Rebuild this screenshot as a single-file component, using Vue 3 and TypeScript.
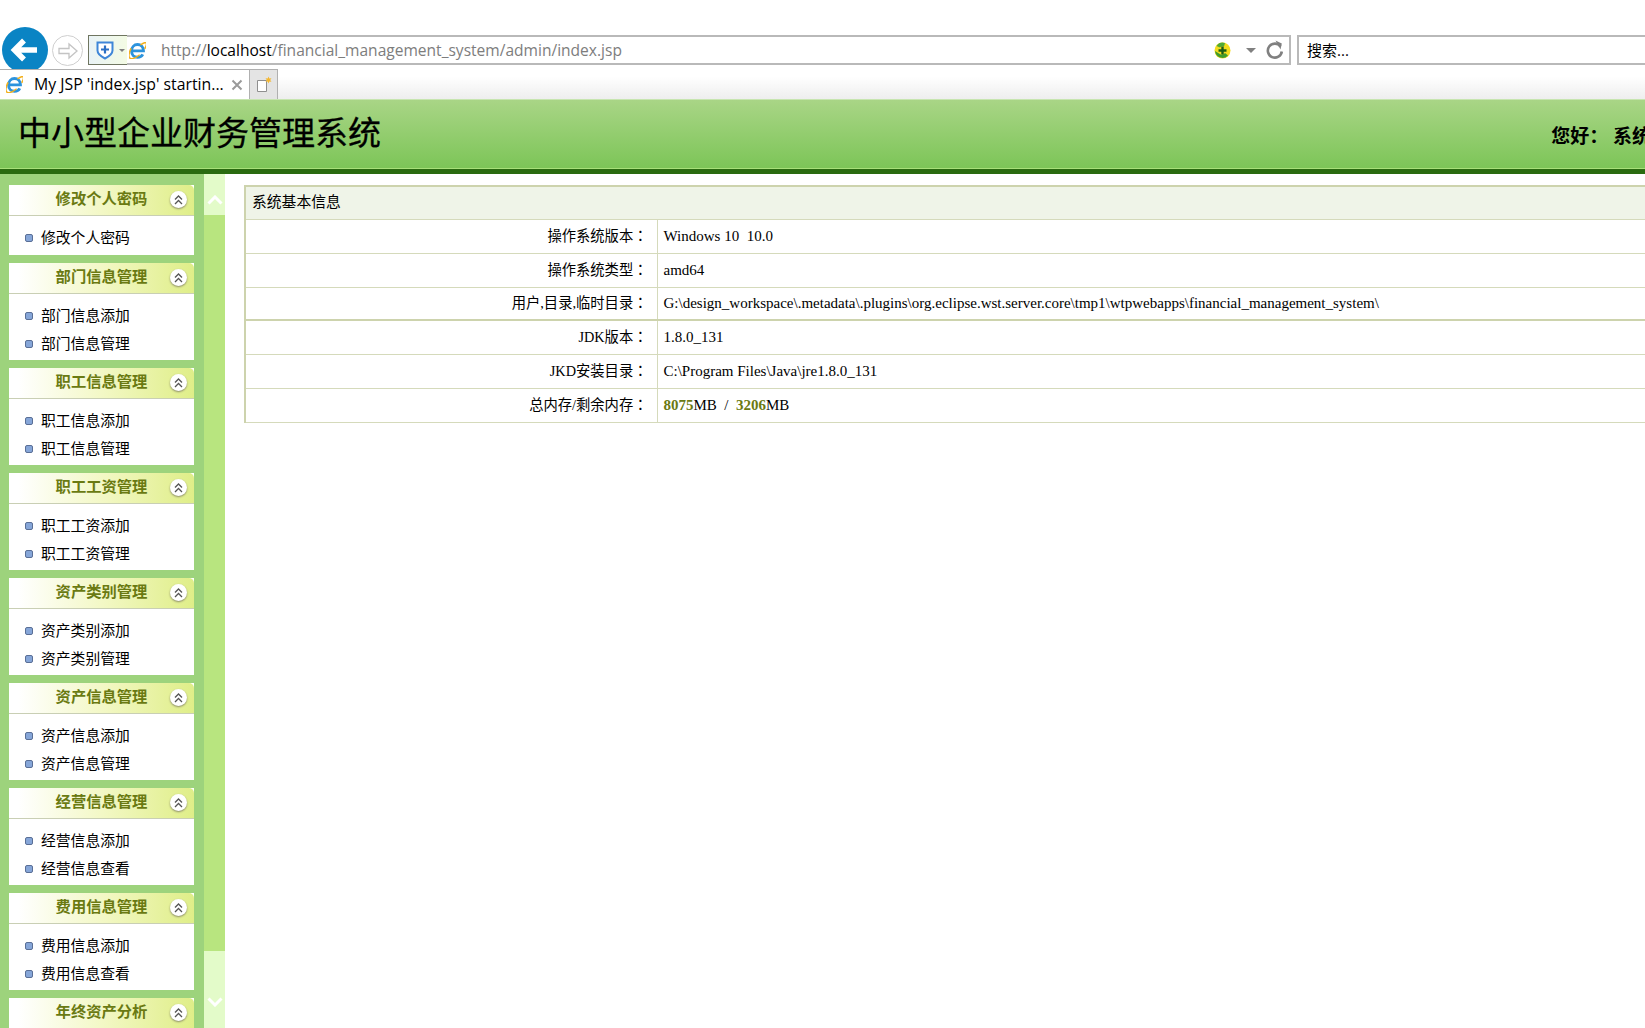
<script setup lang="ts">
interface Panel {
  title: string
  items: string[]
}

const panels: Panel[] = [
  { title: '修改个人密码', items: ['修改个人密码'] },
  { title: '部门信息管理', items: ['部门信息添加', '部门信息管理'] },
  { title: '职工信息管理', items: ['职工信息添加', '职工信息管理'] },
  { title: '职工工资管理', items: ['职工工资添加', '职工工资管理'] },
  { title: '资产类别管理', items: ['资产类别添加', '资产类别管理'] },
  { title: '资产信息管理', items: ['资产信息添加', '资产信息管理'] },
  { title: '经营信息管理', items: ['经营信息添加', '经营信息查看'] },
  { title: '费用信息管理', items: ['费用信息添加', '费用信息查看'] },
  { title: '年终资产分析', items: ['年终资产分析'] },
]

const rows = [
  { label: '操作系统版本：', value: 'Windows 10\u00a0\u00a010.0' },
  { label: '操作系统类型：', value: 'amd64' },
  {
    label: '用户,目录,临时目录：',
    value: 'G:\\design_workspace\\.metadata\\.plugins\\org.eclipse.wst.server.core\\tmp1\\wtpwebapps\\financial_management_system\\',
  },
  { label: 'JDK版本：', value: '1.8.0_131' },
  { label: 'JKD安装目录：', value: 'C:\\Program Files\\Java\\jre1.8.0_131' },
]
</script>

<template>
  <div class="page">
    <svg width="0" height="0" class="defs">
      <symbol id="ie" viewBox="2 2 20 20" overflow="visible">
        <path d="M6 12.500h13c0-4.500-3-7.500-7-7.500s-7 3.300-7 7.500 3 7.500 7 7.500c3 0 5-1.200 6.200-3.500" fill="none" stroke="#2c93dd" stroke-width="3.400" />
        <path d="M4.500 9.500C1.500 15 1 20 3.500 21.200c2.500 1.200 7-1 11-4.200M15.500 5.500C19.500 3 22 2 22.500 3.500c.5 1.500-.5 4-2 6.500" fill="none" stroke="#f2b01e" stroke-width="1.800" />
      </symbol>
    </svg>

    <div class="toolbar">
      <div class="back">
        <svg width="46" height="46" viewBox="0 0 46 46">
          <path d="M12 23h23M22 13.500 12.500 23l9.500 9.500" fill="none" stroke="#fff" stroke-width="5.500" />
        </svg>
      </div>
      <div class="forward">
        <svg width="22" height="22" viewBox="0 0 22 22">
          <path d="M2 8.500h10V4l8 7-8 7v-4.500H2z" fill="none" stroke="#c4c4c4" stroke-width="1.300" />
        </svg>
      </div>
      <div class="address">
        <div class="shield-box">
          <svg width="20" height="20" viewBox="0 0 20 20">
            <path d="M2.500 2.500h15v8c0 3.500-3.500 6-7.500 8-4-2-7.500-4.500-7.500-8z" fill="#fff" stroke="#3f86d8" stroke-width="2" />
            <path d="M10 5.500v8M6 9.500h8" stroke="#2b6fc4" stroke-width="2.200" />
          </svg>
          <span class="caret small"></span>
        </div>
        <svg class="addr-ie" width="17" height="17"><use href="#ie" /></svg>
        <div class="url">http://<b>localhost</b>/financial_management_system/admin/index.jsp</div>
        <svg class="guard" width="17" height="17" viewBox="0 0 17 17">
          <circle cx="8.500" cy="8.500" r="8" fill="#f3dc1d" />
          <path d="M1 9a7.500 7.500 0 0 0 13 4.500L11 11a4 4 0 0 1-6 .5z" fill="#3f9b2c" />
          <path d="M2.500 4A7.500 7.500 0 0 1 11 1l-1 3.500a4 4 0 0 0-4 1z" fill="#4fa936" />
          <path d="M8.500 4.500v8M4.500 8.500h8" stroke="#1d5c14" stroke-width="2.400" />
        </svg>
        <span class="caret"></span>
        <svg class="reload" width="20" height="20" viewBox="0 0 20 20">
          <path d="M15.500 6.500a7 7 0 1 0 1.300 5" fill="none" stroke="#808080" stroke-width="2.600" />
          <path d="M10.500 0.500 16.800 3.500 15.500 9.500z" fill="#808080" />
        </svg>
      </div>
      <div class="search">搜索...</div>
    </div>

    <div class="tabbar">
      <div class="tab">
        <svg width="17" height="17"><use href="#ie" /></svg>
        <span class="tab-title">My JSP 'index.jsp' startin...</span>
        <svg class="tab-close" width="12" height="12" viewBox="0 0 12 12">
          <path d="M1.500 1.500l9 9M10.500 1.500l-9 9" stroke="#9a9a9a" stroke-width="2" />
        </svg>
      </div>
      <div class="new-tab">
        <svg width="18" height="18" viewBox="0 0 18 18">
          <path d="M2.500 4.500h9v11h-9z" fill="#fff" stroke="#8f8f8f" />
          <path d="M13.500 0.500l.8 2 2.200-.3-1.300 1.800 1.300 1.800-2.200-.3-.8 2-.8-2-2.200.3 1.300-1.800-1.300-1.800 2.200.3z" fill="#f4b730" />
        </svg>
      </div>
    </div>

    <header class="banner">
      <h1 class="title">中小型企业财务管理系统</h1>
      <div class="greet">您好：&nbsp;系统管理员</div>
    </header>

    <div class="body">
      <aside class="sidebar">
        <section v-for="p in panels" :key="p.title" class="panel">
          <div class="panel-head">
            {{ p.title }}
            <span class="collapse">
              <svg width="9" height="10" viewBox="0 0 9 10">
                <path d="M1 4.500 4.500 1 8 4.500M1 9 4.500 5.500 8 9" fill="none" stroke="#555" stroke-width="1.300" />
              </svg>
            </span>
          </div>
          <ul class="panel-body" :class="{ single: p.items.length === 1 }">
            <li v-for="item in p.items" :key="item" class="item">
              <span class="bullet"></span>{{ item }}
            </li>
          </ul>
        </section>
      </aside>

      <div class="splitter">
        <div class="thumb">
          <svg width="16" height="10" viewBox="0 0 16 10">
            <path d="M1.500 8.500 8 2l6.500 6.500" fill="none" stroke="#fff" stroke-width="3" />
          </svg>
        </div>
        <div class="thumb bottom">
          <svg width="16" height="10" viewBox="0 0 16 10">
            <path d="M1.500 1.500 8 8l6.500-6.500" fill="none" stroke="#fff" stroke-width="3" />
          </svg>
        </div>
      </div>

      <main class="main">
        <table class="info">
          <colgroup>
            <col class="col-label" />
            <col />
          </colgroup>
          <thead>
            <tr>
              <th colspan="2">系统基本信息</th>
            </tr>
          </thead>
          <tbody>
            <tr v-for="r in rows" :key="r.label">
              <td class="label">{{ r.label }}</td>
              <td>{{ r.value }}</td>
            </tr>
            <tr>
              <td class="label">总内存/剩余内存：</td>
              <td><b class="num">8075</b>MB&nbsp;&nbsp;/&nbsp;&nbsp;<b class="num">3206</b>MB</td>
            </tr>
          </tbody>
        </table>
      </main>
    </div>
  </div>
</template>

<style scoped>
.page {
  width: 1760px;
  height: 1028px;
  display: flex;
  flex-direction: column;
  overflow: hidden;
  background: #fff;
  font-family: "Liberation Serif", "Noto Sans CJK SC", serif;
  color: #000;
}

.defs {
  position: absolute;
}

.toolbar {
  height: 69px;
  flex: none;
  display: flex;
  align-items: flex-start;
  padding-top: 27px;
  box-sizing: border-box;
  font-family: "Open Sans", "Noto Sans CJK SC", sans-serif;
}

.back {
  width: 46px;
  height: 46px;
  flex: none;
  margin-left: 2px;
  border-radius: 50%;
  background: #0a84c4;
}

.forward {
  width: 31px;
  height: 31px;
  flex: none;
  box-sizing: border-box;
  margin: 8px 5px 0 4px;
  border: 1px solid #cfcfcf;
  border-radius: 50%;
  display: flex;
  align-items: center;
  justify-content: center;
}

.address {
  width: 1203px;
  height: 30px;
  flex: none;
  margin-top: 8px;
  box-sizing: border-box;
  display: flex;
  align-items: center;
  border: 2px solid #b9b9b9;
  border-left: 0;
}

.shield-box {
  width: 39px;
  height: 30px;
  flex: none;
  box-sizing: border-box;
  margin: -2px 0;
  display: flex;
  align-items: center;
  gap: 4px;
  padding-left: 6px;
  border: 1px solid #6f7560;
  border-right: 0;
  background: linear-gradient(90deg, #eaf3f6, #f3fbe4);
}

.caret {
  width: 0;
  height: 0;
  border: 5px solid transparent;
  border-top: 5px solid #808080;
  border-bottom: 0;
  margin-left: 15px;
}

.caret.small {
  border-width: 3px 3px 0;
  margin-left: 0;
}

.addr-ie {
  margin-left: 2px;
  flex: none;
}

.url {
  flex: 1;
  margin-left: 15px;
  font-size: 15.55px;
  color: #7d7d7d;
  white-space: nowrap;
}

.url b {
  font-weight: 400;
  color: #000;
}

.reload {
  margin: 0 4px 0 9px;
  flex: none;
}

.search {
  flex: 1;
  height: 30px;
  margin-top: 8px;
  margin-left: 6px;
  box-sizing: border-box;
  border: 2px solid #b9b9b9;
  padding-left: 8px;
  font-size: 15px;
  line-height: 26px;
}

.tabbar {
  height: 30px;
  flex: none;
  display: flex;
  background: linear-gradient(#fff, #fff 25%, #eeeeee);
  font-family: "Open Sans", "Noto Sans CJK SC", sans-serif;
}

.tab {
  width: 250px;
  flex: none;
  box-sizing: border-box;
  display: flex;
  align-items: center;
  padding-left: 6px;
  background: #fff;
  border-top: 1px solid #b0b0b0;
  border-right: 1px solid #b0b0b0;
}

.tab-title {
  margin-left: 11px;
  padding-bottom: 2px;
  font-size: 15.8px;
  white-space: nowrap;
}

.tab-close {
  margin-left: 7px;
}

.new-tab {
  width: 28px;
  flex: none;
  box-sizing: border-box;
  display: flex;
  align-items: center;
  justify-content: center;
  background: #e4e4e4;
  border-top: 1px solid #b0b0b0;
  border-right: 1px solid #b0b0b0;
}

.banner {
  height: 75px;
  flex: none;
  box-sizing: border-box;
  display: flex;
  align-items: center;
  justify-content: space-between;
  padding: 0 52px 0 18px;
  background: linear-gradient(#a9d586, #7cc557);
  border-top: 1px solid #c7e5b0;
  border-bottom: 5px solid #2a6b10;
  box-shadow: inset 0 -1px 0 #a8e07a;
}

.title {
  margin: 0;
  font-size: 33px;
  font-weight: 400;
  -webkit-text-stroke: 0.3px #000;
  line-height: 1;
  white-space: nowrap;
}

.greet {
  font-size: 19px;
  font-weight: 700;
  white-space: nowrap;
}

.body {
  flex: 1;
  min-height: 0;
  display: flex;
}

.sidebar {
  width: 204px;
  flex: none;
  box-sizing: border-box;
  padding: 11px 10px 0 9px;
  background: #9dd37c;
  overflow: hidden;
}

.panel {
  margin-bottom: 8px;
  background: #fff;
}

.panel-head {
  height: 31px;
  box-sizing: border-box;
  position: relative;
  border-radius: 5px 5px 0 0;
  border-bottom: 1px solid #c9cfb4;
  background: linear-gradient(90deg, #fff 5%, #f3f8c6 50%, #dfee88);
  color: #6a7a12;
  font-size: 15.3px;
  font-weight: 700;
  line-height: 28px;
  text-align: center;
}

.collapse {
  position: absolute;
  right: 7px;
  top: 6px;
  width: 17px;
  height: 17px;
  border-radius: 50%;
  background: #fff;
  box-shadow: 0 1px 2px #8b8b6a;
  display: flex;
  align-items: center;
  justify-content: center;
}

.panel-body {
  margin: 0;
  padding: 8px 0 2px;
  list-style: none;
}

.panel-body.single {
  padding-bottom: 3px;
}

.item {
  height: 28px;
  box-sizing: border-box;
  display: flex;
  align-items: center;
  padding: 0 0 3px 16px;
  font-size: 14.8px;
}

.bullet {
  width: 6px;
  height: 6px;
  flex: none;
  margin: 3px 8px 0 0;
  background: #86a6d8;
  border: 1px solid #5a6f96;
  border-radius: 2px;
}

.splitter {
  width: 21px;
  flex: none;
  display: flex;
  flex-direction: column;
  justify-content: space-between;
  background: #b8e57f;
}

.thumb {
  height: 41px;
  box-sizing: border-box;
  padding-top: 21px;
  display: flex;
  justify-content: center;
  background: #e3fbc9;
}

.thumb.bottom {
  height: 77px;
  padding-top: 46px;
}

.main {
  flex: 1;
  min-width: 0;
  padding: 11px 0 0 19px;
}

.info {
  width: 100%;
  border-collapse: collapse;
  table-layout: fixed;
  border-top: 2px solid #cdd3ad;
  border-left: 2px solid #cdd3ad;
  font-size: 15px;
}

.col-label {
  width: 412px;
}

.info th {
  height: 33px;
  padding: 0 6px 5px;
  box-sizing: border-box;
  font-size: 14.8px;
  font-weight: 400;
  text-align: left;
  background: #eff4e8;
  border-bottom: 1px solid #d5dabb;
}

.info td {
  height: 34px;
  box-sizing: border-box;
  padding: 0 6px;
  border-bottom: 1px solid #d5dabb;
  white-space: nowrap;
}

.info tr:nth-child(3) td {
  height: 33px;
  border-bottom: 2px solid #cdd3ad;
}

.info td.label {
  font-family: "Liberation Serif", "Noto Sans CJK TC", serif;
  font-size: 14.3px;
  text-align: right;
  padding: 0 9px 4px 6px;
  border-right: 1px solid #d5dabb;
}

.num {
  color: #6a7a12;
}
</style>

<style>
html,
body {
  margin: 0;
  overflow: hidden;
}
</style>
